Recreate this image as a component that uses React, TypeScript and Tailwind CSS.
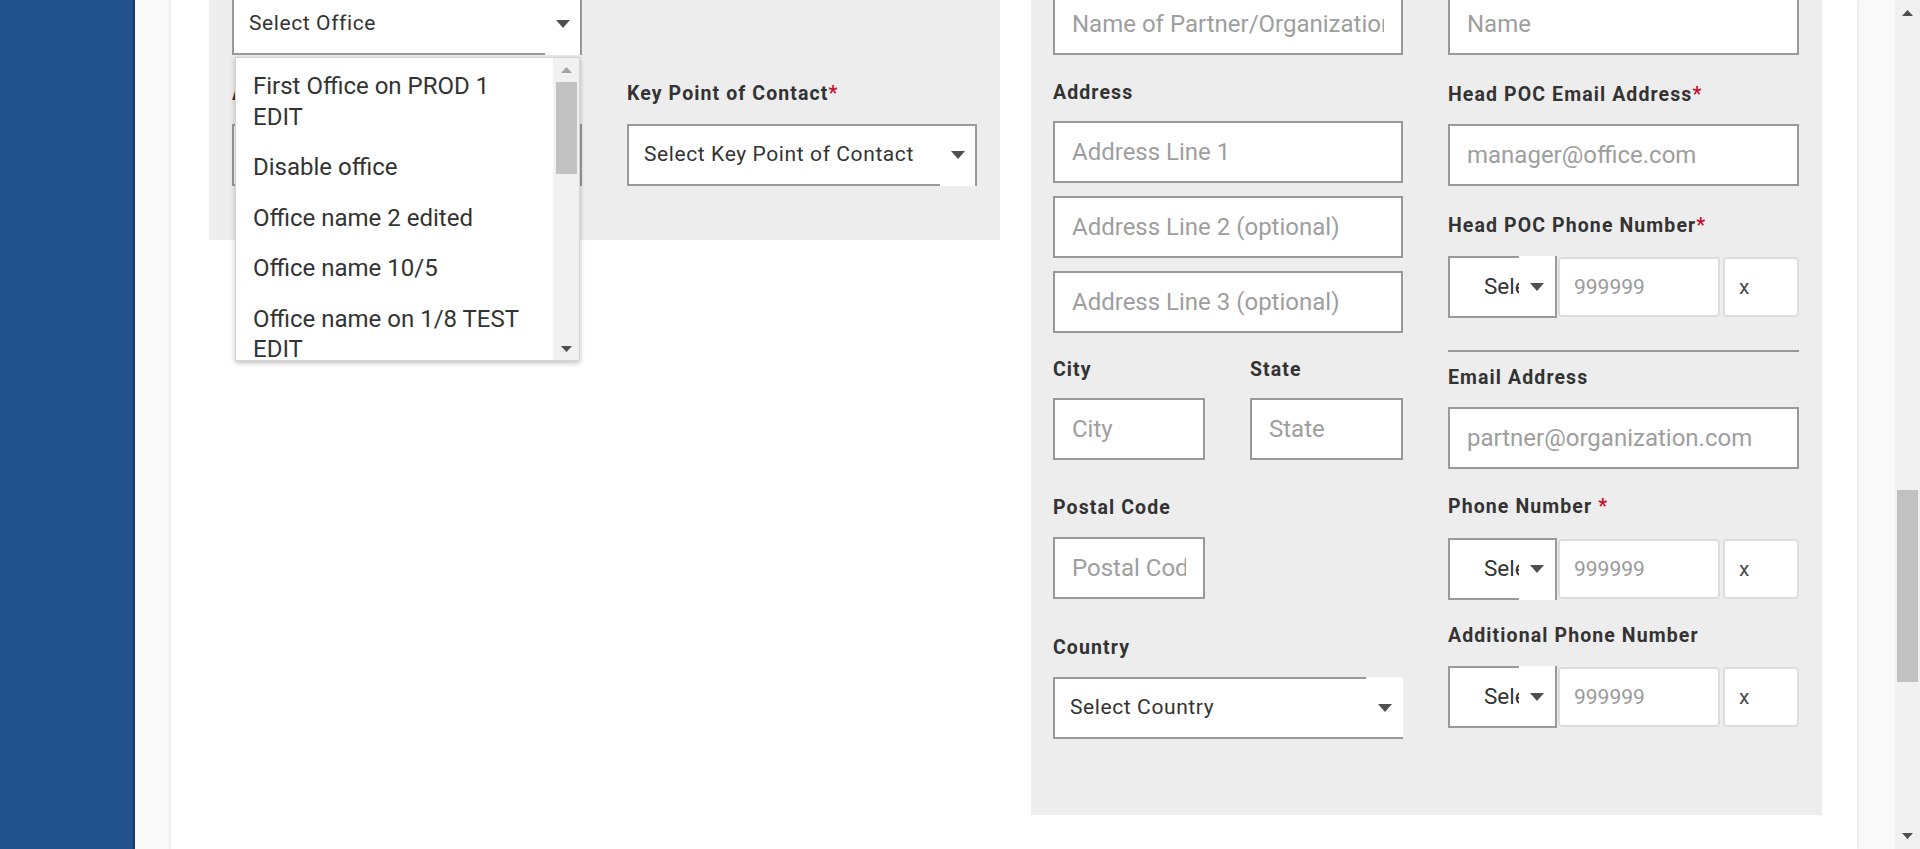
import React from "react";

function Caret({ color = "#505050", w = 14, h = 8 }: { color?: string; w?: number; h?: number }) {
  return (
    <svg width={w} height={h} viewBox="0 0 14 8" className="block">
      <polygon points="0,0 14,0 7,8" fill={color} />
    </svg>
  );
}

function CaretUp({ color = "#505050" }: { color?: string }) {
  return (
    <svg width="11" height="6" viewBox="0 0 11 6" className="block">
      <polygon points="0,6 11,6 5.5,0" fill={color} />
    </svg>
  );
}

function CaretDown({ color = "#505050" }: { color?: string }) {
  return (
    <svg width="11" height="6" viewBox="0 0 11 6" className="block">
      <polygon points="0,0 11,0 5.5,6" fill={color} />
    </svg>
  );
}

function Label({ children, className = "" }: { children: React.ReactNode; className?: string }) {
  return (
    <div
      className={
        "text-[19.5px] leading-[24px] font-bold tracking-[1.1px] text-[#333] whitespace-nowrap " + className
      }
    >
      {children}
    </div>
  );
}

function Req() {
  return <span className="text-[#c8102e]">*</span>;
}

function TextInput({ placeholder, className = "" }: { placeholder: string; className?: string }) {
  return (
    <input
      readOnly
      placeholder={placeholder}
      className={
        "block h-[62px] border-2 border-[#999] bg-white px-[17px] text-[24px] text-[#333] placeholder:text-[#9e9e9e] outline-none " +
        className
      }
    />
  );
}

function FakeSelect({
  text,
  coverTop,
  className = "",
}: {
  text: string;
  coverTop: boolean;
  className?: string;
}) {
  return (
    <div
      className={
        "relative flex h-[62px] items-center border-2 border-[#999] bg-white pl-[15px] text-[21px] tracking-[0.6px] text-[#333] " +
        className
      }
    >
      <span className="min-w-0 flex-1 overflow-hidden whitespace-nowrap">{text}</span>
      <div
        className={
          coverTop
            ? "absolute top-[-2px] right-[-2px] bottom-0 flex w-[37px] items-center justify-center bg-white pt-[2px]"
            : "absolute top-0 right-0 bottom-[-2px] flex w-[35px] items-center justify-center bg-white pb-[2px]"
        }
      >
        <Caret />
      </div>
    </div>
  );
}

function PhoneRow({ coverTop }: { coverTop: boolean }) {
  return (
    <div className="flex h-[62px] items-center">
      <div className="relative flex h-[62px] w-[109px] shrink-0 items-center border-2 border-[#999] bg-white pl-[34px] text-[22.5px] text-[#333]">
        <span className="min-w-0 flex-1 overflow-hidden whitespace-nowrap">Select</span>
        <div
          className={
            coverTop
              ? "absolute top-[-2px] right-0 bottom-0 flex w-[36px] items-center justify-center bg-white pt-[2px]"
              : "absolute top-0 right-0 bottom-[-2px] flex w-[36px] items-center justify-center bg-white pb-[2px]"
          }
        >
          <Caret />
        </div>
      </div>
      <input
        readOnly
        placeholder="999999"
        className="ml-[1px] block h-[60px] w-[162px] shrink-0 rounded-[4px] border-2 border-[#dddddd] bg-white pl-[14px] text-[21px] placeholder:text-[#9a9a9a] outline-none"
      />
      <input
        readOnly
        placeholder="x"
        className="ml-[3px] block h-[60px] w-[76px] min-w-0 rounded-[4px] border-2 border-[#dddddd] bg-white pl-[14px] text-[21px] placeholder:text-[#4a4a4a] outline-none"
      />
    </div>
  );
}

const offices = [
  "First Office on PROD 1 EDIT",
  "Disable office",
  "Office name 2 edited",
  "Office name 10/5",
  "Office name on 1/8 TEST EDIT",
  "Office name 3",
];

function OfficeDropdown() {
  return (
    <div className="absolute left-[3px] top-[64px] z-20 flex h-[304px] w-[345px] border border-[#d4d4d4] bg-white shadow-[0_2px_5px_rgba(0,0,0,0.25)]">
      <div className="min-w-0 flex-1 overflow-hidden pt-[3px]">
        {offices.map((o) => (
          <div key={o} className="py-[10px] pl-[17px] pr-[16px] text-[24px] leading-[30.5px] text-[#333]">
            {o}
          </div>
        ))}
      </div>
      <div className="flex w-[26px] shrink-0 flex-col items-center bg-[#f1f1f1]">
        <div className="flex h-[24px] items-center justify-center">
          <CaretUp color="#a3a3a3" />
        </div>
        <div className="h-[92px] w-[21px] bg-[#c1c1c1]" />
        <div className="flex-1" />
        <div className="flex h-[22px] items-center justify-center">
          <CaretDown color="#505050" />
        </div>
      </div>
    </div>
  );
}

function LeftPanel() {
  return (
    <div className="grid grid-cols-[350px_350px] gap-x-[45px] bg-[#ededed] px-[23px] pb-[54px]">
      <div className="relative z-10">
        <FakeSelect text="Select Office" coverTop={false} />
        <OfficeDropdown />
      </div>
      <div />
      <div className="mt-[27px]">
        <Label>Assigned Office</Label>
        <FakeSelect text="Select" coverTop={false} className="mt-[18px]" />
      </div>
      <div className="mt-[27px]">
        <Label>
          Key Point of Contact
          <Req />
        </Label>
        <FakeSelect text="Select Key Point of Contact" coverTop={false} className="mt-[18px]" />
      </div>
    </div>
  );
}

function RightPanel() {
  return (
    <div className="grid grid-cols-[350px_351px] items-start gap-x-[45px] bg-[#ededed] pl-[22px] pr-[23px] pb-[76px]">
      <div className="flex flex-col">
        <TextInput placeholder="Name of Partner/Organization" className="w-full" />
        <Label className="mt-[26px]">Address</Label>
        <TextInput placeholder="Address Line 1" className="mt-[16px] w-full" />
        <TextInput placeholder="Address Line 2 (optional)" className="mt-[13px] w-full" />
        <TextInput placeholder="Address Line 3 (optional)" className="mt-[13px] w-full" />
        <div className="mt-[25px] grid grid-cols-[152px_153px] gap-x-[45px]">
          <div>
            <Label>City</Label>
            <TextInput placeholder="City" className="mt-[16px] w-full" />
          </div>
          <div>
            <Label>State</Label>
            <TextInput placeholder="State" className="mt-[16px] w-full" />
          </div>
        </div>
        <Label className="mt-[36px]">Postal Code</Label>
        <TextInput placeholder="Postal Code" className="mt-[17px] w-[152px]" />
        <Label className="mt-[37px]">Country</Label>
        <FakeSelect text="Select Country" coverTop={true} className="mt-[17px]" />
      </div>
      <div className="flex flex-col">
        <TextInput placeholder="Name" className="w-full" />
        <Label className="mt-[28px]">
          Head POC Email Address
          <Req />
        </Label>
        <TextInput placeholder="manager@office.com" className="mt-[17px] w-full" />
        <Label className="mt-[28px]">
          Head POC Phone Number
          <Req />
        </Label>
        <div className="mt-[18px]">
          <PhoneRow coverTop={true} />
        </div>
        <div className="mt-[32px] h-[2px] bg-[#999]" />
        <Label className="mt-[14px]">Email Address</Label>
        <TextInput placeholder="partner@organization.com" className="mt-[17px] w-full" />
        <Label className="mt-[26px]">
          Phone Number <Req />
        </Label>
        <div className="mt-[19px]">
          <PhoneRow coverTop={false} />
        </div>
        <Label className="mt-[24px]">Additional Phone Number</Label>
        <div className="mt-[18px]">
          <PhoneRow coverTop={true} />
        </div>
      </div>
    </div>
  );
}

function PageScrollbar() {
  return (
    <div className="flex w-[25px] shrink-0 flex-col items-center bg-[#f1f1f1]">
      <div className="flex h-[26px] items-center justify-center">
        <CaretUp />
      </div>
      <div className="h-[464px]" />
      <div className="h-[192px] w-[21px] bg-[#c1c1c1]" />
      <div className="flex-1" />
      <div className="flex h-[26px] items-center justify-center">
        <CaretDown />
      </div>
    </div>
  );
}

export default function App() {
  return (
    <div className="flex h-[849px] w-[1920px] overflow-hidden bg-[#f9f9f9] font-[Roboto,sans-serif]">
      <aside className="w-[135px] shrink-0 border-r-2 border-[#173c6b] bg-[#22528e]" />
      <main className="flex min-w-0 flex-1 pl-[36px] pr-[38px]">
        <div className="min-w-0 flex-1 bg-white pl-[38px] pr-[35px] shadow-[0_0_4px_rgba(0,0,0,0.14)]">
          <div className="-mt-[7px] grid grid-cols-[791px_791px] items-start gap-x-[31px]">
            <LeftPanel />
            <RightPanel />
          </div>
        </div>
      </main>
      <PageScrollbar />
    </div>
  );
}
